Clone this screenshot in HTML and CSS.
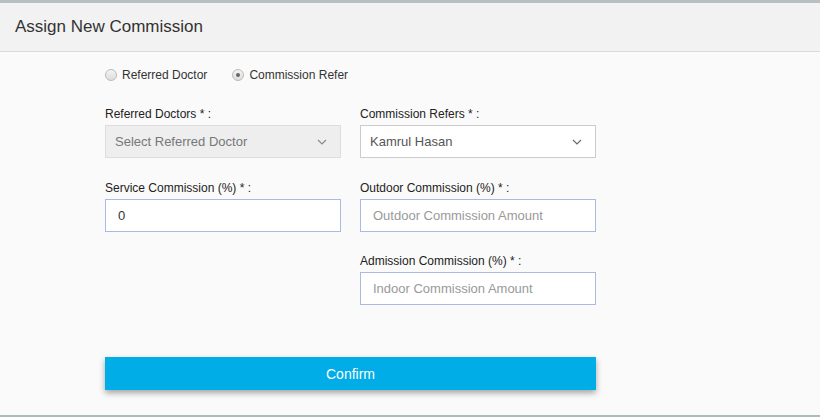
FILE: index.html
```html
<!DOCTYPE html>
<html>
<head>
<meta charset="utf-8">
<link rel="stylesheet" href="styles.css">
</head>
<body>
<div class="backdrop-top"></div>
<div class="modal">
  <div class="modal-header">
    <h4 class="modal-title">Assign New Commission</h4>
  </div>
  <div class="modal-body">
    <div class="form">
      <div class="radio-row">
        <label class="radio"><span class="dot"></span>Referred Doctor</label>
        <label class="radio"><span class="dot checked"></span>Commission Refer</label>
      </div>
      <div class="grid">
        <div class="field">
          <label class="lbl">Referred Doctors * :</label>
          <div class="select disabled"><span>Select Referred Doctor</span>
            <svg class="chev" width="10" height="6" viewBox="0 0 10 6"><path d="M1 1l4 4 4-4" fill="none" stroke="#888" stroke-width="1.1"/></svg>
          </div>
        </div>
        <div class="field">
          <label class="lbl">Commission Refers * :</label>
          <div class="select"><span>Kamrul Hasan</span>
            <svg class="chev" width="10" height="6" viewBox="0 0 10 6"><path d="M1 1l4 4 4-4" fill="none" stroke="#666" stroke-width="1.1"/></svg>
          </div>
        </div>
        <div class="field">
          <label class="lbl">Service Commission (%) * :</label>
          <div class="input value">0</div>
        </div>
        <div class="field">
          <label class="lbl">Outdoor Commission (%) * :</label>
          <div class="input placeholder">Outdoor Commission Amount</div>
        </div>
        <div class="field"></div>
        <div class="field">
          <label class="lbl">Admission Commission (%) * :</label>
          <div class="input placeholder">Indoor Commission Amount</div>
        </div>
      </div>
      <button class="confirm">Confirm</button>
    </div>
  </div>
</div>
<div class="backdrop-bottom"></div>
</body>
</html>
```
FILE: styles.css
```css
html, body {
  margin: 0;
  padding: 0;
  height: 417px;
  overflow: hidden;
  background: #b6c2c0;
  font-family: "Liberation Sans", Arial, sans-serif;
  color: #333;
}
.backdrop-top {
  height: 3px;
  background: #b8c1c1;
}
.backdrop-bottom {
  height: 2px;
  background: #a6c0b8;
}
.modal {
  background: #fafafa;
  height: 412px;
  display: flex;
  flex-direction: column;
}
.modal-header {
  background: #f2f2f2;
  border-bottom: 1px solid #dcdcdc;
  height: 48px;
  display: flex;
  align-items: center;
  padding-left: 15px;
}
.modal-title {
  margin: 0;
  font-size: 17px;
  font-weight: normal;
  color: #333;
}
.modal-body {
  padding-left: 105px;
}
.form {
  width: 491px;
}
.radio-row {
  display: flex;
  gap: 25px;
  height: 46px;
  align-items: center;
  font-size: 12px;
  color: #333;
}
.radio {
  display: flex;
  align-items: center;
}
.dot {
  width: 12px;
  height: 12px;
  border-radius: 50%;
  border: 1px solid #bbb;
  background: linear-gradient(#f4f4f4, #dcdcdc);
  margin-right: 5px;
  box-sizing: border-box;
  position: relative;
}
.dot.checked::after {
  content: "";
  position: absolute;
  left: 3px;
  top: 3px;
  width: 4px;
  height: 4px;
  border-radius: 50%;
  background: #666;
}
.grid {
  display: grid;
  grid-template-columns: 236px 236px;
  grid-template-rows: 74px 73px 74px;
  column-gap: 19px;
}
.field {
  padding-top: 9px;
  box-sizing: border-box;
}
.lbl {
  display: block;
  font-size: 12px;
  color: #222;
  margin-bottom: 4px;
  height: 14px;
}
.select, .input {
  height: 33px;
  box-sizing: border-box;
  border: 1px solid #ccc;
  background: #fff;
  display: flex;
  align-items: center;
  font-size: 13px;
  color: #555;
}
.select {
  padding: 0 13px 0 9px;
  justify-content: space-between;
}
.select.disabled {
  background: #eee;
  border-color: #ddd;
  color: #777;
}
.input {
  border-color: #a9bbe3;
  padding-left: 12px;
}
.input.value {
  color: #333;
}
.input.placeholder {
  color: #999;
}
.confirm {
  display: block;
  margin-top: 38px;
  width: 491px;
  height: 33px;
  border: none;
  background: #00ade6;
  color: #fff;
  font-family: "Liberation Sans", Arial, sans-serif;
  font-size: 14px;
  box-shadow: 0 3px 6px rgba(0,0,0,0.35);
  cursor: pointer;
}
```
